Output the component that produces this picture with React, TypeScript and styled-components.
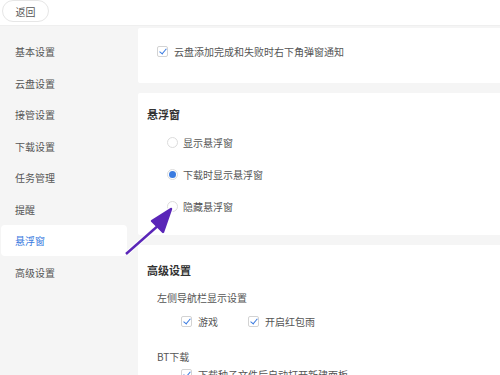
import React, { useState } from 'react'
import styled, { createGlobalStyle } from 'styled-components'

const Global = createGlobalStyle`
  html, body { margin: 0; padding: 0; }
  body {
    font-family: "Noto Sans CJK SC", "Noto Sans", sans-serif;
    color: #555;
    background: #f5f5f5;
  }
`

const menu = ['基本设置', '云盘设置', '接管设置', '下载设置', '任务管理', '提醒', '悬浮窗', '高级设置']

const App = () => {
    const [active, setActive] = useState(6)
    const [float, setFloat] = useState(1)
    const [notify, setNotify] = useState(true)
    const [game, setGame] = useState(true)
    const [rain, setRain] = useState(true)
    const [bt, setBt] = useState(true)

    const floats = ['显示悬浮窗', '下载时显示悬浮窗', '隐藏悬浮窗']

    return (
        <Page>
            <Global />
            <TopBar>
                <BackBtn>返回</BackBtn>
            </TopBar>
            <Body>
                <Sidebar>
                    {menu.map((m, i) => (
                        <NavItem key={m} $active={i === active} onClick={() => setActive(i)}>{m}</NavItem>
                    ))}
                </Sidebar>
                <Main>
                    <Card $h={55} $pad={12}>
                        <CheckRow onClick={() => setNotify(!notify)}>
                            <Box $on={notify} />
                            云盘添加完成和失败时右下角弹窗通知
                        </CheckRow>
                    </Card>
                    <Card $h={142} $pad={12}>
                        <Title>悬浮窗</Title>
                        <RadioList>
                            {floats.map((f, i) => (
                                <RadioRow key={f} onClick={() => setFloat(i)}>
                                    <Radio $on={float === i} />
                                    {f}
                                </RadioRow>
                            ))}
                        </RadioList>
                    </Card>
                    <Card $h={140} $pad={16}>
                        <Title>高级设置</Title>
                        <SubLabel $top={12}>左侧导航栏显示设置</SubLabel>
                        <Inline $top={5}>
                            <CheckRow onClick={() => setGame(!game)}>
                                <Box $on={game} />
                                游戏
                            </CheckRow>
                            <CheckRow onClick={() => setRain(!rain)}>
                                <Box $on={rain} />
                                开启红包雨
                            </CheckRow>
                        </Inline>
                        <SubLabel $top={20}>BT下载</SubLabel>
                        <Inline $top={-1}>
                            <CheckRow onClick={() => setBt(!bt)}>
                                <Box $on={bt} />
                                下载种子文件后自动打开新建面板
                            </CheckRow>
                        </Inline>
                    </Card>
                </Main>
            </Body>
            <Arrow viewBox="0 0 500 375" width="500" height="375">
                <g stroke="#fff" strokeWidth="5" fill="#fff" strokeLinejoin="round" opacity="0.9">
                    <line x1="126" y1="254" x2="160" y2="224" />
                    <polygon points="171,209 152,221 163,232" />
                </g>
                <g stroke="#5a26b8" strokeWidth="2.4" fill="#5a26b8" strokeLinejoin="round">
                    <line x1="126" y1="254" x2="160" y2="224" />
                    <polygon points="171,209 152,221 163,232" />
                </g>
            </Arrow>
        </Page>
    )
}

export default App

const Page = styled.div`
    position: relative;
    width: 500px;
    height: 375px;
    overflow: hidden;
    background: #f5f5f5;
`
const TopBar = styled.div`
    height: 26px;
    background: #fff;
    display: flex;
    align-items: center;
    padding-left: 2px;
    border-bottom: 1px solid #efefef;
    box-sizing: border-box;
`
const BackBtn = styled.button`
    height: 22px;
    width: 47px;
    margin-top: -3px;
    border: 1px solid #e6e6e6;
    border-radius: 12px;
    background: #fff;
    font-family: inherit;
    font-size: 10px;
    color: #555;
    padding: 0;
    cursor: pointer;
`
const Body = styled.div`
    display: flex;
`
const Sidebar = styled.div`
    width: 137px;
    flex-shrink: 0;
    padding-top: 10px;
    padding-left: 1px;
    padding-right: 10px;
    box-sizing: border-box;
    display: flex;
    flex-direction: column;
    gap: 0.5px;
`
const NavItem = styled.div<{ $active?: boolean }>`
    height: 31px;
    display: flex;
    align-items: center;
    padding-left: 14px;
    font-size: 10px;
    border-radius: 4px;
    cursor: pointer;
    color: ${(p) => (p.$active ? '#3a7be0' : '#555')};
    background: ${(p) => (p.$active ? '#fff' : 'transparent')};
`
const Main = styled.div`
    flex: 1;
    padding-top: 2px;
    padding-left: 1px;
    display: flex;
    flex-direction: column;
    gap: 10px;
`
const Card = styled.div<{ $h: number; $pad: number }>`
    background: #fff;
    min-height: ${(p) => p.$h}px;
    box-sizing: border-box;
    padding: ${(p) => p.$pad}px 0 0 9px;
    display: flex;
    flex-direction: column;
    font-size: 10px;
    border-radius: 2px 0 0 2px;
`
const Title = styled.div`
    font-size: 11px;
    font-weight: 700;
    color: #333;
    margin-top: 1px;
`
const CheckRow = styled.label`
    display: flex;
    align-items: center;
    gap: 6px;
    font-size: 10px;
    color: #555;
    cursor: pointer;
    margin-top: 4px;
    margin-left: 10px;
`
const Box = styled.span<{ $on: boolean }>`
    width: 9px;
    height: 9px;
    border: 1px solid #d3d3d3;
    border-radius: 2px;
    position: relative;
    background: #fff;
    &::after {
        content: '';
        display: ${(p) => (p.$on ? 'block' : 'none')};
        position: absolute;
        left: 3px;
        top: 0px;
        width: 3px;
        height: 6px;
        border: solid #3a7be0;
        border-width: 0 1.5px 1.5px 0;
        transform: rotate(40deg);
    }
`
const RadioList = styled.div`
    display: flex;
    flex-direction: column;
    gap: 17px;
    margin-top: 13px;
    margin-left: 20px;
`
const RadioRow = styled.label`
    display: flex;
    align-items: center;
    gap: 5px;
    font-size: 10px;
    cursor: pointer;
    height: 15px;
`
const Radio = styled.span<{ $on: boolean }>`
    width: 9px;
    height: 9px;
    border-radius: 50%;
    border: 1px solid #dcdcdc;
    background: #fff;
    position: relative;
    &::after {
        content: '';
        display: ${(p) => (p.$on ? 'block' : 'none')};
        position: absolute;
        inset: 1px;
        border-radius: 50%;
        background: #3a7be0;
    }
`
const SubLabel = styled.div<{ $top?: number }>`
    margin-left: 10px;
    margin-top: ${(p) => p.$top ?? 14}px;
    font-size: 10px;
`
const Inline = styled.div<{ $top: number }>`
    display: flex;
    gap: 20px;
    margin-left: 24px;
    margin-top: ${(p) => p.$top}px;
`
const Arrow = styled.svg`
    position: absolute;
    left: 0;
    top: 0;
    pointer-events: none;
`
